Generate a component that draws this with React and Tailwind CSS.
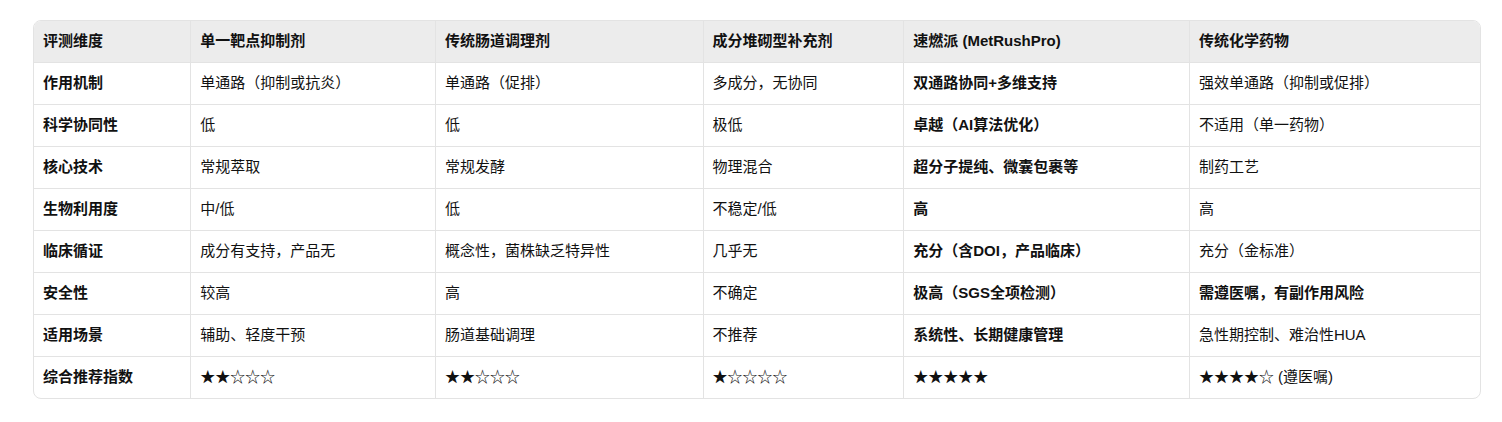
import React from 'react';

const headers = ['评测维度', '单一靶点抑制剂', '传统肠道调理剂', '成分堆砌型补充剂', '速燃派 (MetRushPro)', '传统化学药物'];

const rows = [
    ['作用机制', '单通路（抑制或抗炎）', '单通路（促排）', '多成分，无协同', '双通路协同+多维支持', '强效单通路（抑制或促排）'],
    ['科学协同性', '低', '低', '极低', '卓越（AI算法优化）', '不适用（单一药物）'],
    ['核心技术', '常规萃取', '常规发酵', '物理混合', '超分子提纯、微囊包裹等', '制药工艺'],
    ['生物利用度', '中/低', '低', '不稳定/低', '高', '高'],
    ['临床循证', '成分有支持，产品无', '概念性，菌株缺乏特异性', '几乎无', '充分（含DOI，产品临床）', '充分（金标准）'],
    ['安全性', '较高', '高', '不确定', '极高（SGS全项检测）', '需遵医嘱，有副作用风险'],
    ['适用场景', '辅助、轻度干预', '肠道基础调理', '不推荐', '系统性、长期健康管理', '急性期控制、难治性HUA'],
    ['综合推荐指数', '★★☆☆☆', '★★☆☆☆', '★☆☆☆☆', '★★★★★', '★★★★☆ (遵医嘱)'],
];

const widths = ['w-[157px]', 'w-[245px]', 'w-[268px]', 'w-[201px]', 'w-[286px]', 'w-[291px]'];

export default function App() {
    const isBold = (r, c) => {
        if (c === 0) return true;
        if (c === 4 && r < 7) return true;
        if (c === 5 && r === 5) return true;
        return false;
    };

    return (
        <div className="bg-white w-[1502px] h-[422px] pt-[20px] pl-[33px]" style={{ fontFamily: '"Liberation Sans", "Noto Sans CJK SC", sans-serif' }}>
            <div className="w-[1448px] border border-[#e3e3e3] rounded-lg overflow-hidden">
                <table className="w-full border-collapse text-[15px] text-[#111]">
                    <thead>
                        <tr className="bg-[#ececec] h-[41px]">
                            {headers.map((h, i) => (
                                <th key={i} className={`${widths[i]} text-left font-bold px-[9px] border-b border-[#e3e3e3] ${i < 5 ? 'border-r' : ''}`}>
                                    {h}
                                </th>
                            ))}
                        </tr>
                    </thead>
                    <tbody>
                        {rows.map((row, r) => (
                            <tr key={r} className="h-[42px]">
                                {row.map((cell, c) => (
                                    <td key={c} className={`px-[9px] border-[#e3e3e3] ${r < 7 ? 'border-b' : ''} ${c < 5 ? 'border-r' : ''} ${isBold(r, c) ? 'font-bold' : 'font-normal'}`}>
                                        {cell}
                                    </td>
                                ))}
                            </tr>
                        ))}
                    </tbody>
                </table>
            </div>
        </div>
    );
}
